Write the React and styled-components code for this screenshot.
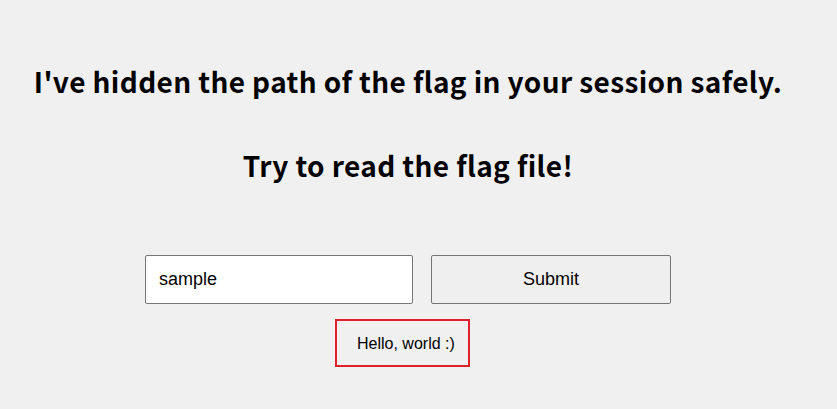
import React from "react";
import styled, { createGlobalStyle } from "styled-components";

const Global = createGlobalStyle`
  html, body { margin: 0; padding: 0; background: #f0f0f0; }
  body { font-family: "Liberation Sans", Arial, sans-serif; }
`;

const Page = styled.div`
  width: 816px;
  display: flex;
  flex-direction: column;
  align-items: center;
  padding-top: 61px;
`;

const Heading = styled.h1`
  margin: 0;
  font-family: "Noto Sans CJK KR", "Noto Sans", sans-serif;
  font-weight: 700;
  font-size: 28px;
  letter-spacing: 0.38px;
  line-height: 40px;
  color: #000;
  text-align: center;
  & + & { margin-top: 44px; }
`;

const Form = styled.form`
  display: flex;
  gap: 18px;
  margin-top: 70px;
`;

const Input = styled.input`
  box-sizing: border-box;
  width: 268px;
  height: 49px;
  padding: 0 13px;
  font-family: "Liberation Sans", Arial, sans-serif;
  font-size: 18px;
  color: #000;
  background: #fff;
  border: 1px solid #767676;
  border-radius: 2px;
  outline: none;
`;

const Button = styled.button`
  box-sizing: border-box;
  width: 240px;
  height: 49px;
  font-family: "Liberation Sans", Arial, sans-serif;
  font-size: 18px;
  color: #000;
  background: #efefef;
  border: 1px solid #767676;
  border-radius: 2px;
`;

const Message = styled.div`
  box-sizing: border-box;
  margin-top: 15px;
  margin-left: -11px;
  width: 135px;
  height: 48px;
  padding-left: 20px;
  padding-top: 2px;
  display: flex;
  align-items: center;
  font-size: 16px;
  color: #000;
  border: 2px solid #e0202a;
`;

export default function App() {
  return (
    <>
      <Global />
      <Page>
        <Heading>I've hidden the path of the flag in your session safely.</Heading>
        <Heading>Try to read the flag file!</Heading>
        <Form onSubmit={(e) => e.preventDefault()}>
          <Input defaultValue="sample" />
          <Button type="submit">Submit</Button>
        </Form>
        <Message>Hello, world :)</Message>
      </Page>
    </>
  );
}
